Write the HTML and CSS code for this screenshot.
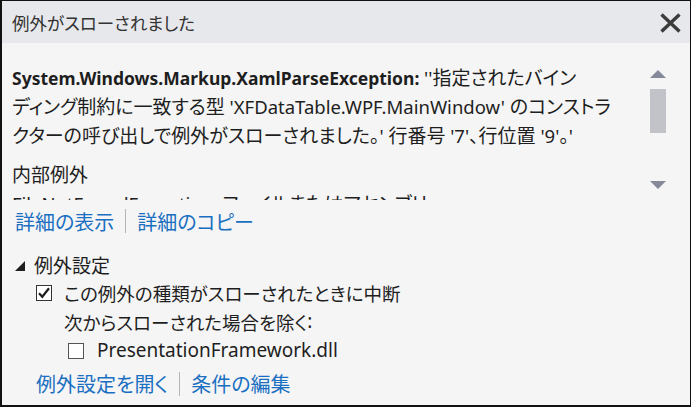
FILE: index.html
```html
<!DOCTYPE html>
<html lang="ja">
<head>
<meta charset="utf-8">
<title>例外がスローされました</title>
<link rel="stylesheet" href="styles.css">
</head>
<body>
<div class="dialog">
  <header class="titlebar">
    <span class="title">例外がスローされました</span>
    <svg class="close" width="23" height="20" viewBox="0 0 23 20" aria-label="閉じる">
      <path d="M2.5 1.5 L20.5 18.5 M20.5 1.5 L2.5 18.5" stroke="#3c3c3c" stroke-width="3.4" fill="none"/>
    </svg>
  </header>
  <main class="content">
    <section class="msgarea">
      <div class="msg">
        <p class="para"><b class="en">System.Windows.Markup.XamlParseException:</b><span class="en"> ''</span>指定されたバイン<br>ディング制約に一致する型<span class="en"> 'XFDataTable.WPF.MainWindow' </span>のコンストラ<br>クターの呼び出しで例外がスローされました。<span class="en">' </span>行番号<span class="en"> '7'</span>、行位置<span class="en"> '9'</span>。<span class="en">'</span></p>
        <p class="para inner">内部例外<br><span class="en">FileNotFoundException: </span>ファイルまたはアセンブリ</p>
      </div>
      <div class="scrollbar">
        <span class="arrow up"></span>
        <span class="thumb"></span>
        <span class="spacer"></span>
        <span class="arrow down"></span>
      </div>
    </section>
    <nav class="links">
      <a class="link">詳細の表示</a>
      <span class="sep"></span>
      <a class="link">詳細のコピー</a>
    </nav>
    <section class="settings">
      <div class="expander"><span class="glyph"></span><span>例外設定</span></div>
      <div class="row level1"><span class="check"><svg width="14" height="14" viewBox="0 0 14 14"><path d="M2 7.2 L5.3 10.8 L12 2.2" stroke="#1e1e1e" stroke-width="2.2" fill="none"/></svg></span><span>この例外の種類がスローされたときに中断</span></div>
      <div class="row level2">次からスローされた場合を除く<span class="en">:</span></div>
      <div class="row level3"><span class="check"></span><span class="en">PresentationFramework.dll</span></div>
      <nav class="links bottom">
        <a class="link">例外設定を開く</a>
        <span class="sep"></span>
        <a class="link">条件の編集</a>
      </nav>
    </section>
  </main>
</div>
</body>
</html>
```
FILE: styles.css
```css
* { box-sizing: border-box; }
html, body { margin: 0; padding: 0; }
body {
  width: 691px;
  height: 407px;
  overflow: hidden;
  font-family: "Noto Sans CJK JP", "Noto Sans", sans-serif;
  font-feature-settings: "palt";
  color: #1e1e1e;
  font-size: 19px;
}
.en {
  font-family: "Noto Sans", "Noto Sans CJK JP", sans-serif;
  font-size: 18.5px;
  line-height: 1;
  font-feature-settings: normal;
}
b.en { font-weight: 700; font-size: 17.5px; }
.dialog {
  width: 691px;
  height: 407px;
  border-style: solid;
  border-color: #111;
  border-width: 1px 1px 2px 2px;
  background: #f5f5f5;
  display: flex;
  flex-direction: column;
}
.titlebar {
  height: 42px;
  background: #e7e8ec;
  display: flex;
  align-items: center;
  justify-content: space-between;
  padding: 0 8px 0 10px;
  flex: none;
}
.title {
  font-size: 17.5px;
  color: #333;
  padding-top: 1px;
}
.close { display: block; margin-top: 2px; }
.content {
  flex: 1;
  display: flex;
  flex-direction: column;
}
.msgarea {
  height: 157px;
  display: flex;
  flex: none;
}
.msg {
  width: 626px;
  padding: 19px 0 0 10px;
  overflow: hidden;
  line-height: 29px;
  white-space: nowrap;
}
.para { margin: 0; }
.inner { margin-top: 10px; }
.scrollbar {
  width: 17px;
  margin-left: 21px;
  padding-top: 27px;
  padding-bottom: 11px;
  display: flex;
  flex-direction: column;
  align-items: center;
}
.arrow {
  width: 0;
  height: 0;
  border-left: 8px solid transparent;
  border-right: 8px solid transparent;
}
.arrow.up { border-bottom: 8px solid #868999; }
.arrow.down { border-top: 8px solid #868999; }
.thumb {
  width: 16px;
  height: 44px;
  background: #c2c3c9;
  margin-top: 11px;
}
.spacer { flex: 1; }
.links {
  display: flex;
  align-items: center;
  height: 44px;
  padding-left: 13px;
  padding-bottom: 2px;
  font-size: 20px;
}
.link {
  color: #1a6fc1;
  cursor: pointer;
}
.sep {
  width: 1px;
  height: 24px;
  background: #b5b5b5;
  margin: 0 11px 0 11px;
}
.settings {
  display: flex;
  flex-direction: column;
  font-size: 18.5px;
}
.expander {
  display: flex;
  align-items: center;
  height: 34px;
  padding-left: 13px;
  padding-top: 7px;
  font-size: 19px;
}
.glyph {
  width: 0;
  height: 0;
  border-left: 10px solid transparent;
  border-bottom: 10px solid #1e1e1e;
  margin-right: 9px;
  margin-top: 2px;
}
.row {
  display: flex;
  align-items: center;
  height: 29px;
}
.row .en { font-size: 19px; }
.level1 { padding-left: 34px; }
.level2 { padding-left: 62px; }
.level3 { padding-left: 66px; }
.check {
  width: 16px;
  height: 16px;
  border: 1px solid #333;
  background: #fff;
  margin-right: 12px;
  display: flex;
  align-items: center;
  justify-content: center;
}
.level3 .check { border-color: #555; margin-right: 13px; }
.links.bottom {
  padding-left: 34px;
  height: 34px;
  padding-top: 3px;
  padding-bottom: 0;
}
```
